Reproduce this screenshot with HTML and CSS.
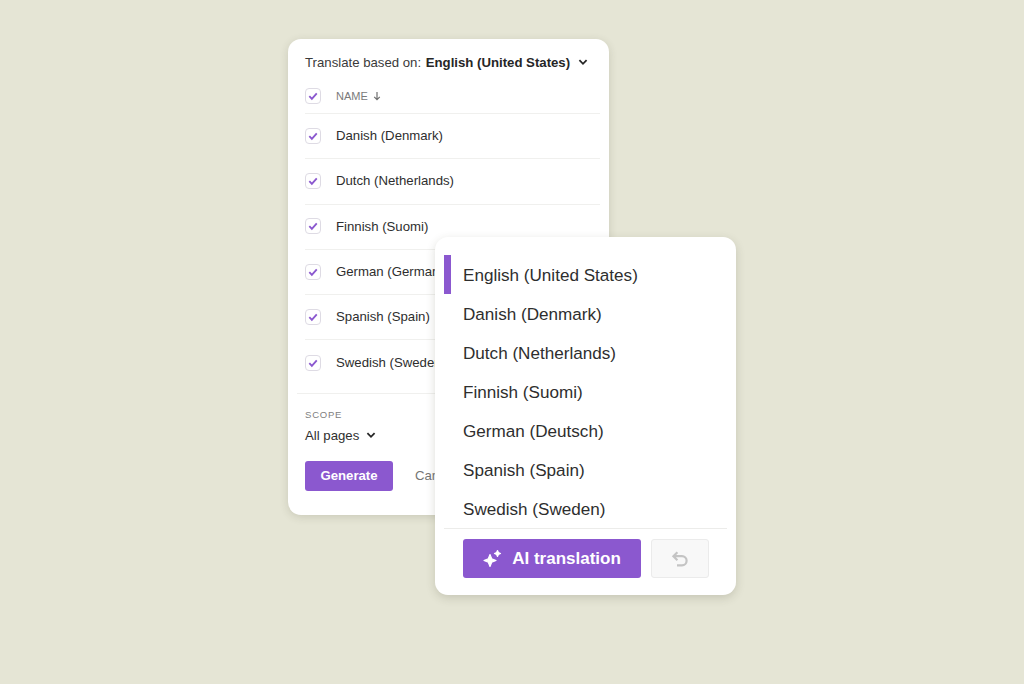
FILE: index.html
```html
<!DOCTYPE html>
<html lang="en-us">
<head>
  <meta charset="utf-8">
  <title>AI translation</title>
  <link rel="stylesheet" href="styles.css">
</head>
<body>
  <svg class="icon-defs" width="0" height="0">
    <symbol id="check" viewBox="0 0 16 16"><path d="M3.800 8.200l2.900 3 5.600-6.200" fill="none" stroke="#8b58cf" stroke-width="2.100"/></symbol>
    <symbol id="chevron" viewBox="0 0 10 10"><path d="M1.400 3.200L5 6.800l3.600-3.600" fill="none" stroke="#262626" stroke-width="1.800"/></symbol>
  </svg>

  <div class="stage">
    <!-- Translate panel -->
    <section class="panel">
      <div class="based-on">
        Translate based on: <b>English (United States)</b>
        <svg class="chevron"><use href="#chevron"/></svg>
      </div>

      <div class="row row-head">
        <span class="checkbox"><svg><use href="#check"/></svg></span>
        <span class="name-head">NAME</span>
        <svg class="sort-arrow" viewBox="0 0 10 10"><path d="M5 1v7.400M2.200 5.800L5 8.600l2.800-2.800" fill="none" stroke="#6f6f6f" stroke-width="1.200"/></svg>
      </div>
      <div class="row"><span class="checkbox"><svg><use href="#check"/></svg></span>Danish (Denmark)</div>
      <div class="row"><span class="checkbox"><svg><use href="#check"/></svg></span>Dutch (Netherlands)</div>
      <div class="row"><span class="checkbox"><svg><use href="#check"/></svg></span>Finnish (Suomi)</div>
      <div class="row"><span class="checkbox"><svg><use href="#check"/></svg></span>German (German)</div>
      <div class="row"><span class="checkbox"><svg><use href="#check"/></svg></span>Spanish (Spain)</div>
      <div class="row row-last"><span class="checkbox"><svg><use href="#check"/></svg></span>Swedish (Sweden)</div>

      <div class="scope">
        <div class="scope-label">SCOPE</div>
        <div class="scope-value">All pages <svg class="chevron"><use href="#chevron"/></svg></div>
      </div>

      <div class="actions">
        <button class="btn-generate">Generate</button>
        <span class="cancel">Cancel</span>
      </div>
    </section>

    <!-- Language menu, lies over the panel -->
    <section class="menu">
      <ul class="lang-list">
        <li class="active">English (United States)</li>
        <li>Danish (Denmark)</li>
        <li>Dutch (Netherlands)</li>
        <li>Finnish (Suomi)</li>
        <li>German (Deutsch)</li>
        <li>Spanish (Spain)</li>
        <li>Swedish (Sweden)</li>
      </ul>
      <div class="menu-foot">
        <button class="btn-ai">
          <svg viewBox="0 0 20 20"><path d="M7 5.500l1.700 4.200 4.300 1.800-4.300 1.800L7 17.500l-1.700-4.200L1 11.500l4.300-1.800zM14.500 1.500l.9 2.100 2.100.9-2.100.9-.9 2.100-.9-2.100-2.100-.9 2.100-.9z" fill="#fff" stroke="#fff" stroke-width="1.200" stroke-linejoin="round"/></svg>
          AI translation
        </button>
        <button class="btn-undo">
          <svg viewBox="0 0 20 20"><path d="M7.400 3.200L3.400 7.200l4 4M3.800 7.200h8.200a4.600 4.600 0 0 1 0 9.200H7" fill="none" stroke="#c4c4c4" stroke-width="2.200"/></svg>
        </button>
      </div>
    </section>
  </div>
</body>
</html>
```
FILE: styles.css
```css
html, body {
  height: 100%;
  margin: 0;
  overflow: hidden;
  background: #e5e5d5;
  font-family: "Liberation Sans", Arial, sans-serif;
  color: #2e2e2e;
}
.icon-defs {
  position: absolute;
}
.stage {
  position: relative;
  width: 321px;
  margin-left: 288px;
  padding-top: 39px;
}

/* Back panel */
.panel {
  height: 476px;
  box-sizing: border-box;
  padding: 15px 9px 0 17px;
  background: #fff;
  border-radius: 13px;
  box-shadow: 0 2px 8px rgba(60, 60, 40, .16);
  font-size: 13.200px;
}
.based-on {
  height: 17px;
  line-height: 17px;
  white-space: nowrap;
  color: #3a3a3a;
}
.based-on b {
  margin-left: 1px;
  color: #262626;
}
.based-on .chevron {
  margin-left: 4px;
}
.chevron {
  width: 10px;
  height: 10px;
}
.row {
  display: flex;
  align-items: center;
  height: 45.300px;
  box-sizing: border-box;
  padding-bottom: 1px;
  border-bottom: 1px solid #f0f0ee;
  white-space: nowrap;
}
.row-head {
  height: 43px;
  padding: 8px 0 0;
}
.row-last {
  border-bottom: none;
}
.checkbox {
  width: 14px;
  height: 14px;
  margin-right: 15px;
  border: 1px solid #dedbe4;
  border-radius: 4px;
  flex: none;
}
.checkbox svg {
  display: block;
  width: 14px;
  height: 14px;
}
.name-head {
  font-size: 11px;
  color: #7a7a7a;
}
.sort-arrow {
  width: 10px;
  height: 10px;
  margin-left: 4px;
}

.scope {
  margin: 7px -9px 0 -8px;
  padding: 15px 0 0 8px;
  border-top: 1px solid #f0f0ee;
}
.scope-label {
  font-size: 9.500px;
  letter-spacing: .8px;
  line-height: 12px;
  color: #808080;
}
.scope-value {
  margin-top: 7px;
  line-height: 16px;
}
.scope-value .chevron {
  margin-left: 3px;
}
.actions {
  display: flex;
  align-items: center;
  margin-top: 17px;
}
.btn-generate {
  width: 88px;
  height: 30px;
  border: none;
  border-radius: 3px;
  background: #8b58cf;
  color: #fff;
  font: bold 13.200px "Liberation Sans", Arial, sans-serif;
}
.cancel {
  margin-left: 22px;
  color: #757575;
}

/* Front menu */
.menu {
  position: absolute;
  left: 147px;
  top: 237px;
  width: 301px;
  height: 358px;
  box-sizing: border-box;
  padding: 18px 9px 0;
  background: #fff;
  border-radius: 13px;
  box-shadow: 0 3px 10px rgba(60, 60, 40, .18);
}
.lang-list {
  margin: 0;
  padding: 0;
  list-style: none;
  font-size: 17.100px;
}
.lang-list li {
  height: 39px;
  line-height: 41px;
  padding-left: 19px;
}
.lang-list li.active {
  padding-left: 12px;
  border-left: 7px solid #8b58cf;
}
.menu-foot {
  display: flex;
  gap: 10px;
  padding: 10px 0 0 19px;
  border-top: 1px solid #ececea;
}
.btn-ai {
  display: flex;
  align-items: center;
  justify-content: center;
  gap: 9px;
  width: 178px;
  height: 39px;
  padding: 0;
  border: none;
  border-radius: 3px;
  background: #8b58cf;
  color: #fff;
  font: bold 17px "Liberation Sans", Arial, sans-serif;
}
.btn-ai svg {
  width: 20px;
  height: 20px;
}
.btn-undo {
  display: flex;
  align-items: center;
  justify-content: center;
  width: 58px;
  height: 39px;
  padding: 0;
  border: 1px solid #ebebeb;
  border-radius: 3px;
  background: #f8f8f8;
}
.btn-undo svg {
  width: 20px;
  height: 20px;
}
```
